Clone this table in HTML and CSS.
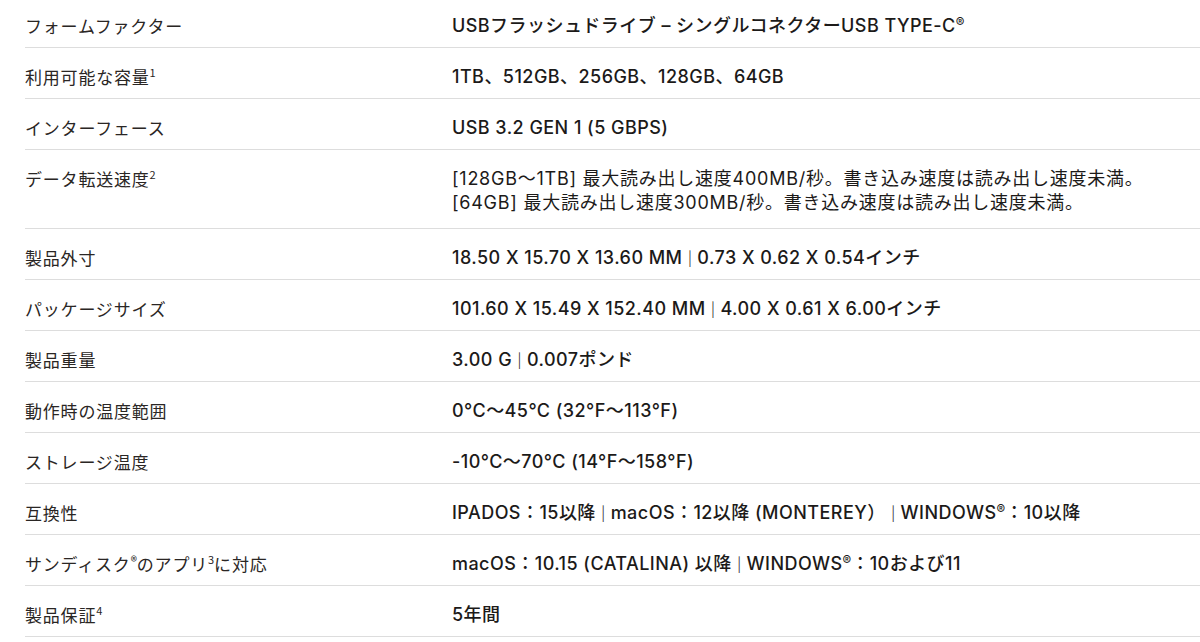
FILE: index.html
```html
<!DOCTYPE html>
<html lang="ja">
<head>
<meta charset="utf-8">
<link rel="stylesheet" href="styles.css">
</head>
<body>
<div class="specs">
  <div class="row"><div class="label">フォームファクター</div><div class="value">USBフラッシュドライブ – シングルコネクターUSB TYPE-C<sup class="reg">®</sup></div></div>
  <div class="row"><div class="label">利用可能な容量<sup>1</sup></div><div class="value">1TB、512GB、256GB、128GB、64GB</div></div>
  <div class="row"><div class="label">インターフェース</div><div class="value">USB 3.2 GEN 1 (5 GBPS)</div></div>
  <div class="row"><div class="label">データ転送速度<sup>2</sup></div><div class="value multi">[128GB～1TB] 最大読み出し速度400MB/秒。書き込み速度は読み出し速度未満。<br>[64GB] 最大読み出し速度300MB/秒。書き込み速度は読み出し速度未満。</div></div>
  <div class="row"><div class="label">製品外寸</div><div class="value">18.50 X 15.70 X 13.60 MM <span class="pipe">|</span> 0.73 X 0.62 X 0.54インチ</div></div>
  <div class="row"><div class="label">パッケージサイズ</div><div class="value">101.60 X 15.49 X 152.40 MM <span class="pipe">|</span> 4.00 X 0.61 X 6.00インチ</div></div>
  <div class="row"><div class="label">製品重量</div><div class="value">3.00 G <span class="pipe">|</span> 0.007ポンド</div></div>
  <div class="row"><div class="label">動作時の温度範囲</div><div class="value">0°C～45°C (32°F～113°F)</div></div>
  <div class="row"><div class="label">ストレージ温度</div><div class="value">-10°C～70°C (14°F～158°F)</div></div>
  <div class="row"><div class="label">互換性</div><div class="value">IPADOS：15以降 <span class="pipe">|</span> macOS：12以降 (MONTEREY） <span class="pipe">|</span> WINDOWS<sup class="reg">®</sup>：10以降</div></div>
  <div class="row"><div class="label">サンディスク<sup class="reg">®</sup>のアプリ<sup>3</sup>に対応</div><div class="value">macOS：10.15 (CATALINA) 以降 <span class="pipe">|</span> WINDOWS<sup class="reg">®</sup>：10および11</div></div>
  <div class="row"><div class="label">製品保証<sup>4</sup></div><div class="value">5年間</div></div>
</div>
</body>
</html>
```
FILE: styles.css
```css
html, body {
  margin: 0;
  padding: 0;
  background: #ffffff;
  overflow: hidden;
}
.specs {
  margin: -3px 0 0 25px;
}
.row {
  display: grid;
  grid-template-columns: 427px 1fr;
  padding: 17px 0 9px 0;
  border-bottom: 1px solid #dddddd;
  line-height: 24px;
  height: 24px;
}
.row:nth-child(4) {
  height: 52px;
}
.label {
  font-family: "Noto Sans CJK JP", sans-serif;
  font-size: 17px;
  font-weight: 400;
  letter-spacing: 0.8px;
  color: #2a2624;
}
.value {
  font-family: "Inter", "Noto Sans CJK JP", sans-serif;
  font-size: 18px;
  font-weight: 500;
  letter-spacing: 0.45px;
  color: #1c1a19;
  white-space: nowrap;
}
.value.multi {
  font-weight: 400;
  letter-spacing: 0.75px;
}
.pipe {
  font-weight: 300;
  font-size: 14px;
  line-height: 0;
  color: #333;
  letter-spacing: 0;
}
sup {
  font-size: 11px;
  line-height: 0;
  vertical-align: 7px;
  letter-spacing: 0;
}
sup.reg {
  font-size: 13px;
  vertical-align: 5px;
}
```
